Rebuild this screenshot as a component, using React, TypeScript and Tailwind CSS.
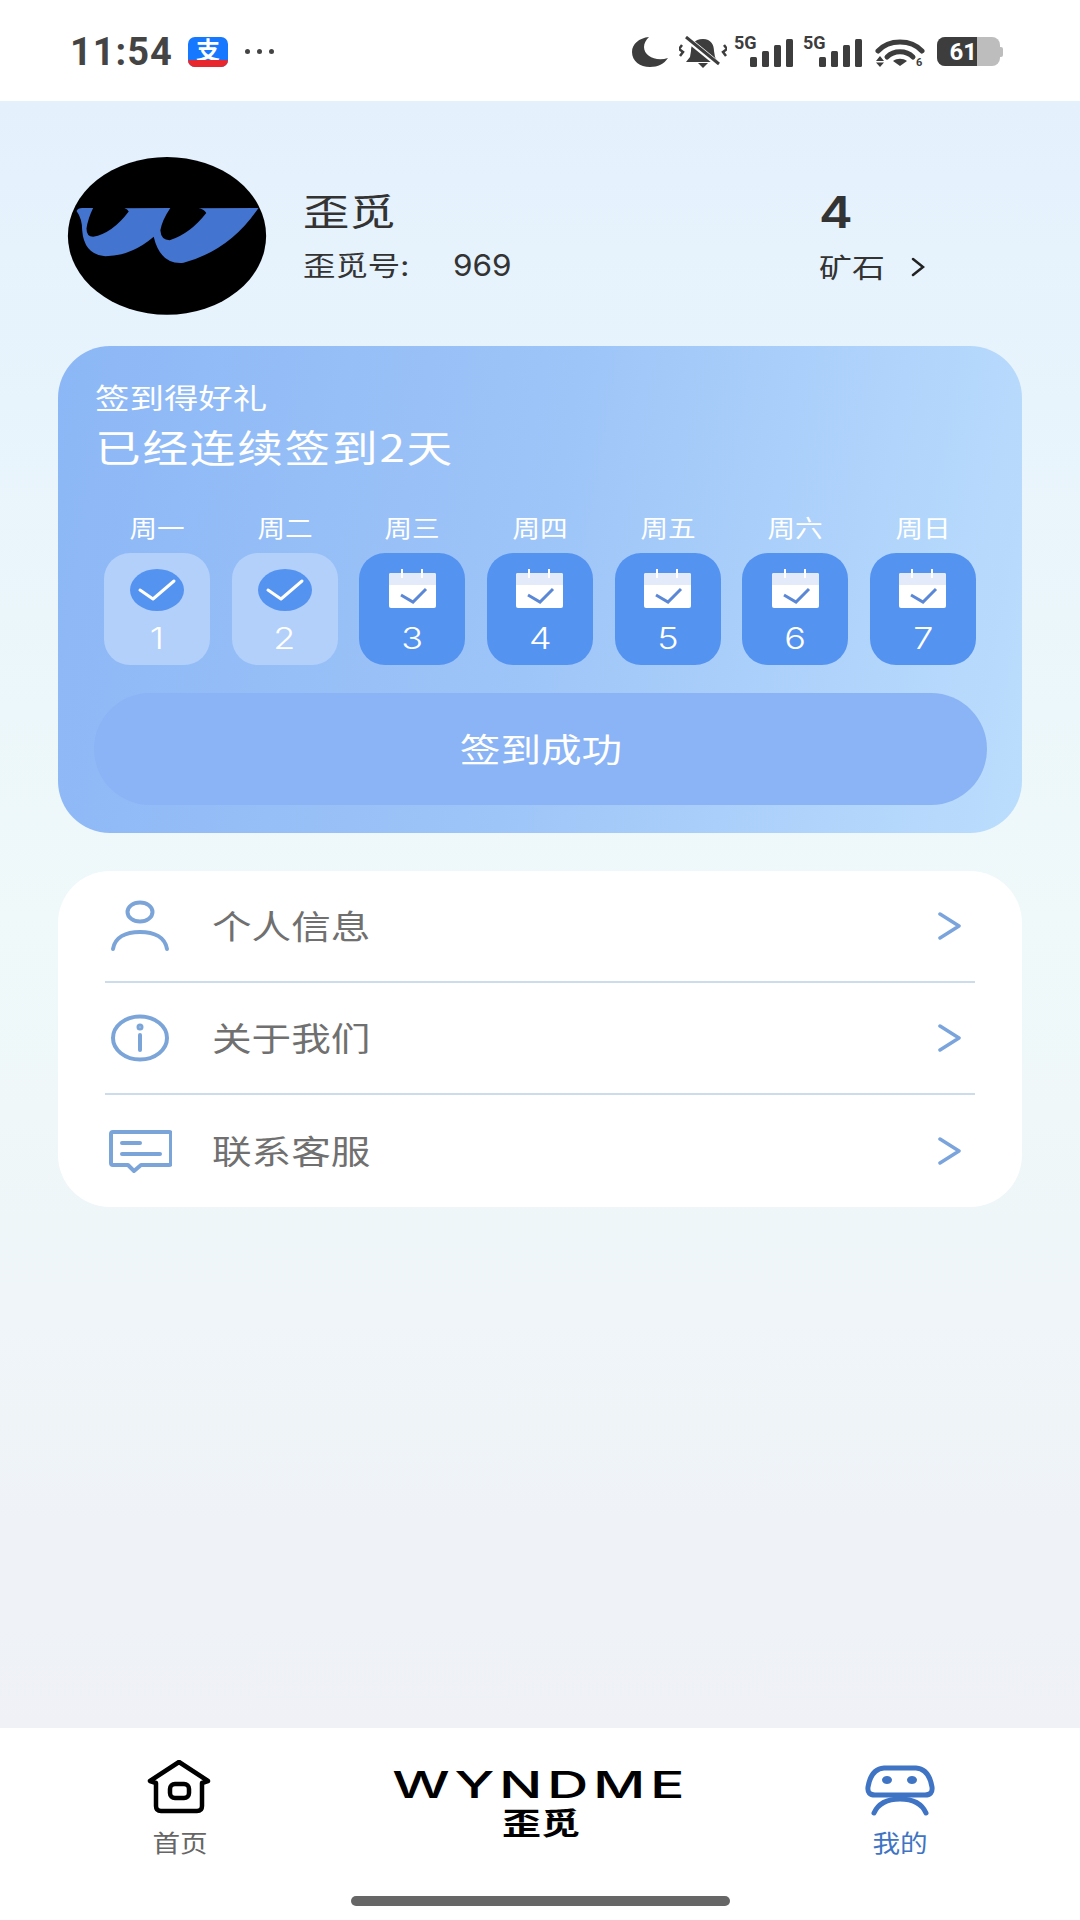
import React from 'react';

const days = [
  { label: '周一', num: 1, done: true },
  { label: '周二', num: 2, done: true },
  { label: '周三', num: 3, done: false },
  { label: '周四', num: 4, done: false },
  { label: '周五', num: 5, done: false },
  { label: '周六', num: 6, done: false },
  { label: '周日', num: 7, done: false },
];

function Signal() {
  return (
    <svg width="62" height="32" viewBox="0 0 62 32" className="overflow-visible">
      <text x="1" y="13" fontSize="18" fontWeight="700" fill="#3d3d3d" fontFamily="Roboto, sans-serif">5G</text>
      <rect x="17" y="21" width="7" height="10" rx="1.5" fill="#3d3d3d" />
      <rect x="29" y="15" width="7" height="16" rx="1.5" fill="#3d3d3d" />
      <rect x="41" y="9" width="7" height="22" rx="1.5" fill="#3d3d3d" />
      <rect x="53" y="3" width="7" height="28" rx="1.5" fill="#3d3d3d" />
    </svg>
  );
}

function Chevron() {
  return (
    <svg width="24" height="30" viewBox="0 0 24 30" fill="none">
      <path d="M2 3 L21 15 L2 27" stroke="#7ba4dc" strokeWidth="3.5" strokeLinecap="round" strokeLinejoin="round" />
    </svg>
  );
}

function CalendarIcon() {
  return (
    <svg width="47" height="39" viewBox="0 0 47 39">
      <rect x="0" y="4" width="47" height="35" rx="2" fill="#ffffff" />
      <path d="M0 16 V6 a2 2 0 0 1 2 -2 H45 a2 2 0 0 1 2 2 V16 Z" fill="#e3ebfa" />
      <path d="M13 0 V9 M33 0 V9" stroke="#ffffff" strokeWidth="2" />
      <path d="M12 26 L24 33 L37 20" stroke="#5a87d6" strokeWidth="3" fill="none" />
    </svg>
  );
}

function CheckIcon() {
  return (
    <svg width="54" height="42" viewBox="0 0 54 42">
      <ellipse cx="27" cy="21" rx="27" ry="21" fill="#5593f1" />
      <path d="M10 21 L23 30 L44 12" stroke="#ffffff" strokeWidth="3" fill="none" strokeLinecap="round" strokeLinejoin="round" />
    </svg>
  );
}

function MenuRow({ icon, text, last }: { icon: React.ReactNode; text: string; last?: boolean }) {
  return (
    <div className={`flex h-[112px] items-center pl-[3px] pr-[13px] ${last ? '' : 'border-b-2 border-[#cddcea]'}`}>
      {icon}
      <span className="mb-[2px] ml-[40px] flex-1 origin-left scale-x-[1.2] text-[33px] leading-[40px] text-[#707070]">{text}</span>
      <Chevron />
    </div>
  );
}

export default function App() {
  return (
    <div className="flex h-[1920px] w-[1080px] flex-col overflow-hidden bg-white font-['Noto_Sans_CJK_SC',sans-serif]">
      {/* Status bar */}
      <div className="flex h-[101px] items-center pl-[70px] pr-[77px] pt-[2px]">
        <span className="w-[118px] font-['Roboto',sans-serif] text-[38px] font-bold leading-[40px] tracking-[1px] text-[#444444]">11:54</span>
        <div className="flex h-[30px] w-[40px] flex-col overflow-hidden rounded-[7px] bg-[#1677ff]">
          <span className="flex-1 text-center text-[24px] font-bold leading-[23px] text-white">支</span>
          <div className="h-[7px] bg-[#e8262e]" />
        </div>
        <div className="ml-[17px] flex gap-[7px]">
          <div className="h-[5px] w-[5px] rounded-full bg-[#444444]" />
          <div className="h-[5px] w-[5px] rounded-full bg-[#444444]" />
          <div className="h-[5px] w-[5px] rounded-full bg-[#444444]" />
        </div>
        <div className="ml-auto flex items-center">
          <svg width="36" height="30" viewBox="0 0 36 30">
            <path d="M17 0 C7 1 0 7 0 15 C0 24 8 30 18 30 C26 30 32 27 36 21 C24 25 12 19 12 10 C12 6 14 3 17 0 Z" fill="#3d3d3d" />
          </svg>
          <svg className="ml-[11px]" width="48" height="32" viewBox="0 0 48 32" fill="none">
            <path d="M24 3 C15 3 12 9 12 15 L11 21 L7 26 H39 L36 21 L35 15 C35 9 32 3 24 3 Z" fill="#3d3d3d" />
            <path d="M19 27 H29 L24 32 Z" fill="#3d3d3d" />
            <path d="M7 2 L40 29" stroke="#ffffff" strokeWidth="6" />
            <path d="M7 1 L40 28" stroke="#3d3d3d" strokeWidth="3" />
            <path d="M3 9 L0 13 L4 16 L1 20 M45 9 L48 13 L44 16 L47 20" stroke="#3d3d3d" strokeWidth="2.5" />
          </svg>
          <div className="ml-[6px]"><Signal /></div>
          <div className="ml-[7px]"><Signal /></div>
          <svg className="ml-[11px]" width="50" height="30" viewBox="0 0 50 30" fill="none">
            <path d="M3 14 C14 2 36 2 47 14" stroke="#3d3d3d" strokeWidth="5" strokeLinecap="round" />
            <path d="M12 20 C19 13 31 13 38 20" stroke="#3d3d3d" strokeWidth="5" strokeLinecap="round" />
            <path d="M18 24 C22 21 28 21 32 24 L25 29 Z" fill="#3d3d3d" />
            <path d="M5 19 L9 24 H1 Z M5 30 L1 25.5 H9 Z" fill="#3d3d3d" />
            <text x="41" y="29" fontSize="11" fontWeight="700" fill="#3d3d3d" fontFamily="Roboto, sans-serif">6</text>
          </svg>
          <div className="ml-[12px] flex items-center">
            <div className="flex h-[29px] w-[63px] overflow-hidden rounded-[8px] bg-[#bdbdbd]">
              <div className="flex w-[40px] items-center justify-end bg-[#3d3d3d] font-['Roboto',sans-serif] text-[24px] font-bold text-white">61</div>
            </div>
            <div className="h-[10px] w-[3px] rounded-r-[2px] bg-[#bdbdbd]" />
          </div>
        </div>
      </div>

      <main className="flex-1 bg-linear-to-b from-[#e4f1fd] via-[#eff9fa] to-[#eff1f6] px-[58px]">
        {/* Profile */}
        <div className="flex items-center pl-[9px] pt-[56px]">
          <svg width="200" height="158" viewBox="52 50 596 475">
            <ellipse cx="350" cy="287" rx="298" ry="237" fill="#000000" />
            <path
              d="M78 212 Q82 203 95 203 L128 203 Q112 235 108 265 Q108 290 128 290 Q185 280 235 214 Q232 206 222 204 L360 203 Q335 240 330 270 Q332 300 358 300 Q420 280 468 218 Q460 206 445 204 L625 203 Q540 330 400 368 Q330 375 310 290 Q240 350 160 348 Q100 340 95 270 Q95 235 78 212 Z"
              fill="#4374cf"
            />
          </svg>
          <div className="ml-[36px] flex-1 pb-[2px]">
            <div className="origin-left scale-x-[1.25] text-[37px] leading-[44px] text-[#333333]">歪觅</div>
            <div className="mt-[16px] flex items-center text-[27px] leading-[34px] text-[#333333]">
              <span className="w-[150px] origin-left scale-x-[1.2]">歪觅号:</span>
              <span className="origin-left scale-x-[1.05] font-['Inter',sans-serif] text-[30px] font-normal">969</span>
            </div>
          </div>
          <div className="w-[203px] pb-[2px]">
            <div className="mt-[3px] origin-left scale-x-[1.15] font-['Inter',sans-serif] text-[44px] font-semibold leading-[44px] text-[#333333]">4</div>
            <div className="mt-[16px] flex items-center text-[27px] leading-[34px] text-[#333333]">
              <span className="w-[92px] origin-left scale-x-[1.22]">矿石</span>
              <svg width="14" height="20" viewBox="0 0 14 20" fill="none">
                <path d="M2 2 L12 10 L2 18" stroke="#222222" strokeWidth="2.5" strokeLinecap="round" />
              </svg>
            </div>
          </div>
        </div>

        {/* Sign-in card */}
        <section className="mt-[31px] h-[487px] rounded-[52px] bg-linear-[100deg,#8cb7f6,#9ec5f8_50%,#bbddfd] pt-[34px]">
          <div className="ml-[37px] origin-left scale-x-[1.23] text-[28px] leading-[34px] text-white">签到得好礼</div>
          <div className="ml-[37px] mt-[9px] origin-left scale-x-[1.2] text-[38px] leading-[46px] tracking-[1.5px] text-white">已经连续签到2天</div>
          <div className="mt-[43px] flex justify-between px-[46px]">
            {days.map((d) => (
              <div key={d.num} className="flex w-[106px] flex-col items-center gap-[11px]">
                <span className="scale-x-[1.15] text-[24px] leading-[30px] text-white">{d.label}</span>
                <div className={`flex h-[112px] w-[106px] flex-col items-center rounded-[26px] pt-[16px] ${d.done ? 'bg-[#b3d0fa]' : 'bg-[#5593f1]'}`}>
                  {d.done ? <CheckIcon /> : <CalendarIcon />}
                  <span className={`scale-x-[1.2] font-['Inter',sans-serif] text-[30px] font-light leading-[36px] text-white ${d.done ? 'mt-[9px]' : 'mt-[12px]'}`}>{d.num}</span>
                </div>
              </div>
            ))}
          </div>
          <div className="ml-[36px] mt-[28px] flex h-[112px] w-[893px] items-center justify-center rounded-[56px] bg-[#8ab4f5]">
            <span className="scale-x-[1.23] text-[33px] text-white">签到成功</span>
          </div>
        </section>

        {/* Menu */}
        <section className="mt-[38px] h-[336px] rounded-[52px] bg-white px-[47px]">
          <MenuRow
            text="个人信息"
            icon={
              <svg width="64" height="64" viewBox="0 0 64 64" fill="none" stroke="#7ba4d8" strokeWidth="4" strokeLinecap="round">
                <ellipse cx="32" cy="18" rx="12.5" ry="9.5" />
                <path d="M5 55 C7 43 18 38 32 38 C46 38 57 43 59 55" />
              </svg>
            }
          />
          <MenuRow
            text="关于我们"
            icon={
              <svg width="64" height="64" viewBox="0 0 64 64" fill="none" stroke="#7ba4d8" strokeWidth="4" strokeLinecap="round">
                <ellipse cx="32" cy="32" rx="27" ry="21.5" />
                <path d="M32 29 V44" />
                <circle cx="32" cy="21" r="1.5" />
              </svg>
            }
          />
          <MenuRow
            last
            text="联系客服"
            icon={
              <svg width="64" height="64" viewBox="0 0 64 64" fill="none" stroke="#7ba4d8" strokeWidth="4" strokeLinejoin="round" strokeLinecap="round">
                <path d="M3 15 Q3 13 5 13 H61 Q63 13 63 15 V44 Q63 46 61 46 H33 L26 52 L20 46 H5 Q3 46 3 44 Z" />
                <path d="M14 24 H32 M14 35 H52" />
              </svg>
            }
          />
        </section>
      </main>

      {/* Bottom nav */}
      <nav className="relative h-[192px] bg-white pl-[120px]">
        <div className="flex items-start gap-[152px] pt-[32px]">
          <div className="flex w-[120px] flex-col items-center">
            <svg width="66" height="54" viewBox="0 0 66 54" fill="none" stroke="#000000" strokeWidth="4.5" strokeLinejoin="round" strokeLinecap="round">
              <path d="M32 2 L3 21 L9 23 V46 Q9 51 14 51 H50 Q55 51 55 46 V23 L61 21 Z" />
              <rect x="23" y="24" width="19" height="14" rx="5" />
            </svg>
            <span className="mt-[13px] scale-x-[1.15] text-[24px] leading-[30px] text-[#666666]">首页</span>
          </div>
          <div className="ml-[4px] flex w-[290px] flex-col items-center pt-[9px]">
            <span className="scale-x-[1.55] font-['Inter',sans-serif] text-[37px] font-medium leading-[32px] tracking-[3px] text-black">WYNDME</span>
            <span className="mt-[2px] scale-x-[1.3] text-[30px] font-bold leading-[36px] text-black">歪觅</span>
          </div>
          <div className="ml-[2px] flex w-[120px] flex-col items-center">
            <svg width="80" height="60" viewBox="0 0 80 60" fill="none" stroke="#3f74c4" strokeWidth="5" strokeLinecap="round" strokeLinejoin="round">
              <path d="M24 8 H56 Q69 9 72 27 Q73 35 65 35 H15 Q7 35 8 27 Q11 9 24 8 Z" />
              <path d="M14 53 C18 44 27 39 40 39 C53 39 62 44 66 53" />
              <ellipse cx="27" cy="20" rx="2.5" ry="1.5" fill="#3f74c4" />
              <ellipse cx="52" cy="20" rx="2.5" ry="1.5" fill="#3f74c4" />
            </svg>
            <span className="mt-[7px] scale-x-[1.15] text-[24px] leading-[30px] text-[#3f74c4]">我的</span>
          </div>
        </div>
        {/* Home indicator */}
        <div className="absolute bottom-[14px] left-[351px] h-[10px] w-[379px] rounded-full bg-[#666666]" />
      </nav>
    </div>
  );
}
